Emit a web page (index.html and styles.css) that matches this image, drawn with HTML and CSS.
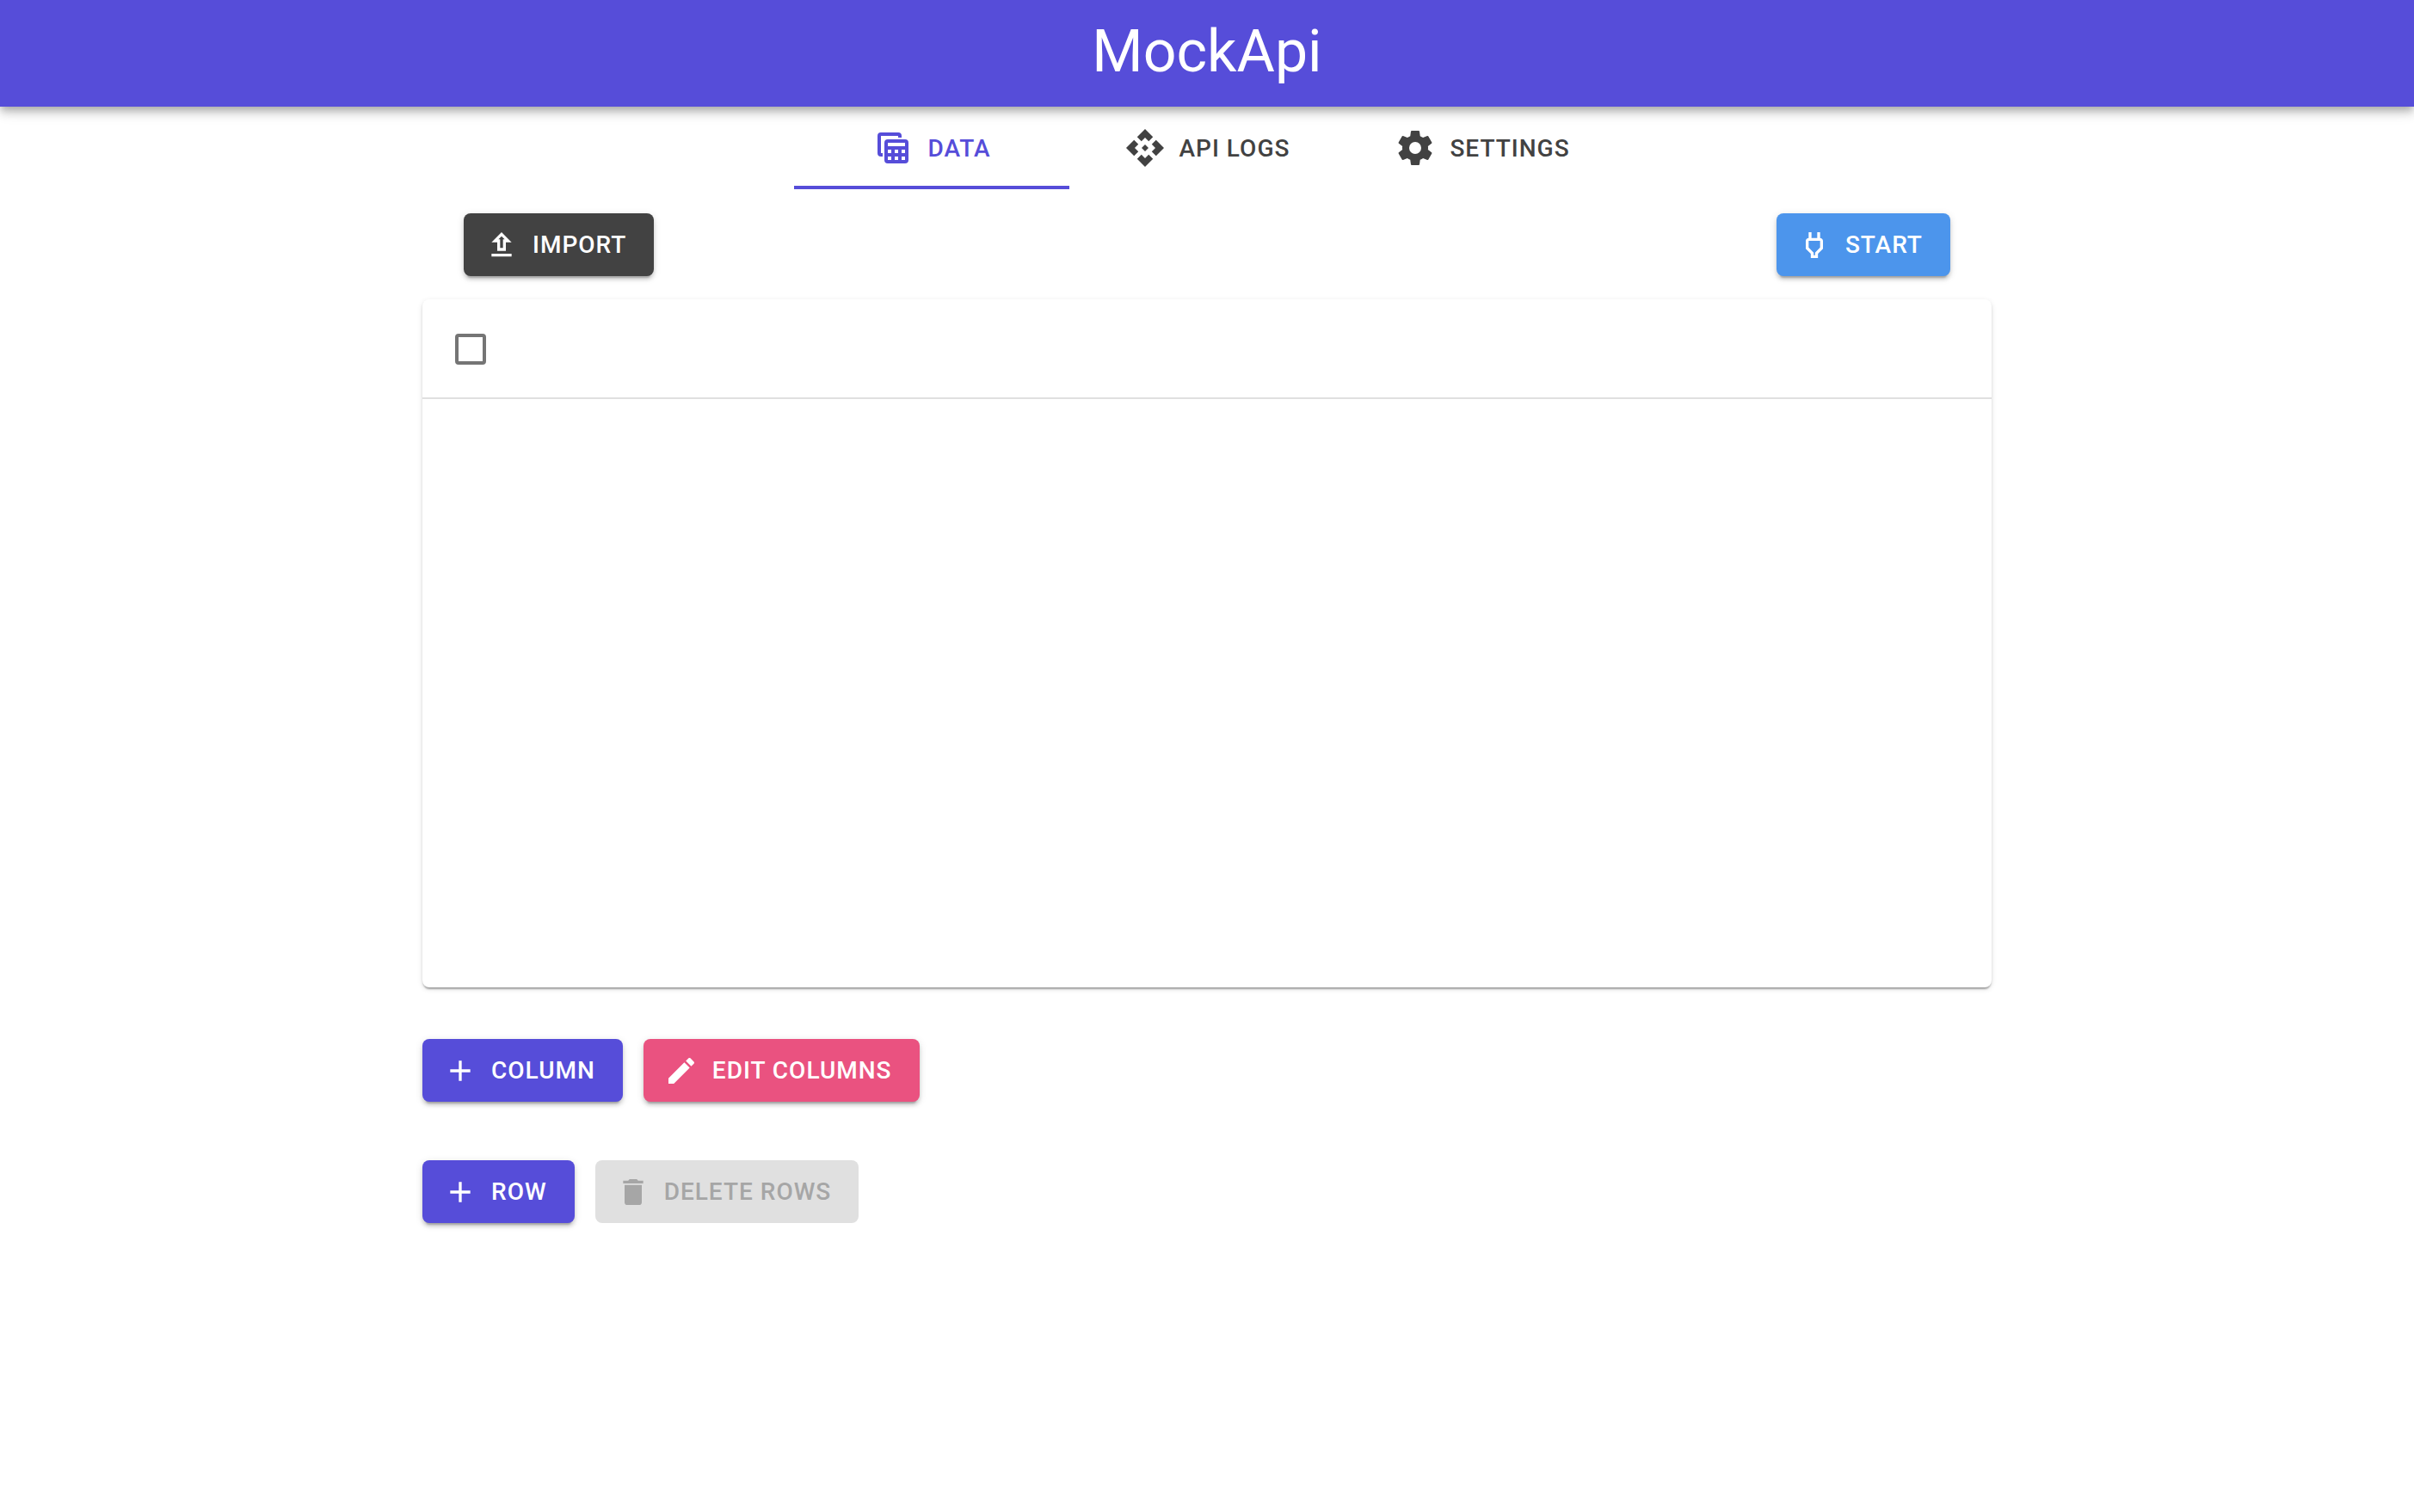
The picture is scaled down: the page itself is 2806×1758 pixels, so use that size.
FILE: index.html
```html
<!DOCTYPE html>
<html lang="en">
<head>
<meta charset="utf-8">
<meta name="viewport" content="width=device-width, initial-scale=1">
<title>MockApi</title>
<link rel="stylesheet" href="styles.css">
</head>
<body>
<header class="app-bar"><h1 class="app-title">MockApi</h1></header>
<nav class="tabs" role="tablist" aria-label="Sections">
  <button class="tab tab-active" type="button" role="tab" aria-selected="true">
    <svg class="tab-icon" viewBox="0 0 24 24" aria-hidden="true"><path d="M5 3H15A2 2 0 0 1 17 5V6H15V5H5V15H6V17H5A2 2 0 0 1 3 15V5A2 2 0 0 1 5 3Z"/><path fill-rule="evenodd" d="M9 7H19A2 2 0 0 1 21 9V19A2 2 0 0 1 19 21H9A2 2 0 0 1 7 19V9A2 2 0 0 1 9 7ZM9 9V11H19V9ZM9 13V15H11V13ZM13 13V15H15V13ZM17 13V15H19V13ZM9 17V19H11V17ZM13 17V19H15V17ZM17 17V19H19V17Z"/></svg>
    <span>DATA</span>
  </button>
  <button class="tab" type="button" role="tab" aria-selected="false">
    <svg class="tab-icon" viewBox="0 0 24 24" aria-hidden="true"><path d="M14 12l-2 2-2-2 2-2 2 2zm-2-6l2.12 2.12 2.5-2.5L12 1 7.38 5.62l2.5 2.5L12 6zm-6 6l2.12-2.12-2.5-2.5L1 12l4.62 4.62 2.5-2.5L6 12zm12 0l-2.12 2.12 2.5 2.5L23 12l-4.62-4.62-2.5 2.5L18 12zm-6 6l-2.12-2.12-2.5 2.5L12 23l4.62-4.62-2.5-2.5L12 18z"/></svg>
    <span>API LOGS</span>
  </button>
  <button class="tab" type="button" role="tab" aria-selected="false">
    <svg class="tab-icon" viewBox="0 0 24 24" aria-hidden="true"><path d="M12 15.5A3.5 3.5 0 0 1 8.5 12 3.5 3.5 0 0 1 12 8.5 3.5 3.5 0 0 1 15.5 12 3.5 3.5 0 0 1 12 15.5M19.43 12.97C19.47 12.65 19.5 12.33 19.5 12 19.5 11.67 19.47 11.34 19.43 11L21.54 9.37C21.73 9.22 21.78 8.95 21.66 8.73L19.66 5.27C19.54 5.05 19.27 4.96 19.05 5.05L16.56 6.05C16.04 5.66 15.5 5.32 14.87 5.07L14.5 2.42C14.46 2.18 14.25 2 14 2H10C9.75 2 9.54 2.18 9.5 2.42L9.13 5.07C8.5 5.32 7.96 5.66 7.44 6.05L4.95 5.05C4.73 4.96 4.46 5.05 4.34 5.27L2.34 8.73C2.21 8.95 2.27 9.22 2.46 9.37L4.57 11C4.53 11.34 4.5 11.67 4.5 12 4.5 12.33 4.53 12.65 4.57 12.97L2.46 14.63C2.27 14.78 2.21 15.05 2.34 15.27L4.34 18.73C4.46 18.95 4.73 19.03 4.95 18.95L7.44 17.94C7.96 18.34 8.5 18.68 9.13 18.93L9.5 21.58C9.54 21.82 9.75 22 10 22H14C14.25 22 14.46 21.82 14.5 21.58L14.87 18.93C15.5 18.67 16.04 18.34 16.56 17.94L19.05 18.95C19.27 19.03 19.54 18.95 19.66 18.73L21.66 15.27C21.78 15.05 21.73 14.78 21.54 14.63L19.43 12.97Z"/></svg>
    <span>SETTINGS</span>
  </button>
</nav>
<main class="content">
  <div class="toolbar">
    <button class="btn btn-dark" type="button">
      <svg class="btn-icon" viewBox="0 0 24 24" aria-hidden="true"><path d="M9 10V16H15V10H19L12 3 5 10H9M12 5.8L14.2 8H13V14H11V8H9.8L12 5.8M19 18H5V20H19V18Z"/></svg>
      <span>IMPORT</span>
    </button>
    <button class="btn btn-info" type="button">
      <svg class="btn-icon" viewBox="0 0 24 24" aria-hidden="true"><path fill-rule="evenodd" d="M16 7V3H14V7H10V3H8V7C7 7 6 8 6 9V14.5L9.5 18V21H14.5V18L18 14.5V9C18 8 17 7 16 7M16 13.67L12.5 17.19V19H11.5V17.19L8 13.67V9H16V13.67Z"/></svg>
      <span>START</span>
    </button>
  </div>
  <section class="card">
    <table class="data-table">
      <thead>
        <tr><th scope="col"><input class="checkbox" type="checkbox" aria-label="Select all rows"></th></tr>
      </thead>
    </table>
  </section>
  <div class="action-rows">
    <div class="actions">
      <button class="btn btn-primary" type="button">
        <svg class="btn-icon" viewBox="0 0 24 24" aria-hidden="true"><path d="M19 13H13V19H11V13H5V11H11V5H13V11H19V13Z"/></svg>
        <span>COLUMN</span>
      </button>
      <button class="btn btn-pink" type="button">
        <svg class="btn-icon" viewBox="0 0 24 24" aria-hidden="true"><path d="M20.71 7.04C21.1 6.65 21.1 6 20.71 5.63L18.37 3.29C18 2.9 17.35 2.9 16.96 3.29L15.12 5.12 18.87 8.87M3 17.25V21H6.75L17.81 9.93 14.06 6.18 3 17.25Z"/></svg>
        <span>EDIT COLUMNS</span>
      </button>
    </div>
    <div class="actions">
      <button class="btn btn-primary" type="button">
        <svg class="btn-icon" viewBox="0 0 24 24" aria-hidden="true"><path d="M19 13H13V19H11V13H5V11H11V5H13V11H19V13Z"/></svg>
        <span>ROW</span>
      </button>
      <button class="btn" type="button" disabled>
        <svg class="btn-icon" viewBox="0 0 24 24" aria-hidden="true"><path d="M19 4H15.5L14.5 3H9.5L8.5 4H5V6H19M6 19A2 2 0 0 0 8 21H16A2 2 0 0 0 18 19V7H6V19Z"/></svg>
        <span>DELETE ROWS</span>
      </button>
    </div>
  </div>
</main>
</body>
</html>
```

FILE: styles.css
```css
:root {
  --primary: #564dd9;
  --dark: #424242;
}

*,
*::before,
*::after {
  box-sizing: border-box;
}

body {
  margin: 0;
  background: #fff;
  font-family: Roboto, "Liberation Sans", sans-serif;
}

button {
  border: 0;
  font: 500 28px/33px Roboto, "Liberation Sans", sans-serif;
  letter-spacing: 1px;
  white-space: nowrap;
}

svg {
  display: block;
  flex: none;
  fill: currentColor;
}

.app-bar {
  position: relative;
  z-index: 1;
  padding: 20px 32px 24px;
  background: var(--primary);
  color: #fff;
  text-align: center;
  box-shadow: 0 4px 8px -2px rgba(0, 0, 0, .2), 0 8px 10px rgba(0, 0, 0, .14), 0 2px 20px rgba(0, 0, 0, .12);
}

.app-title {
  margin: 0;
  font-size: 68px;
  font-weight: 400;
  line-height: 80px;
}

.tabs {
  display: flex;
  justify-content: center;
}

.tab {
  display: flex;
  align-items: center;
  justify-content: center;
  gap: 16px;
  width: 320px;
  height: 96px;
  padding: 0;
  background: none;
  color: var(--dark);
}

.tab-active {
  color: var(--primary);
  box-shadow: inset 0 -4px 0 var(--primary);
}

.tab-icon {
  width: 48px;
  height: 48px;
}

.content {
  width: 65%;
  margin: 0 auto;
}

.toolbar {
  display: flex;
  justify-content: space-between;
  padding: 28px 48px 27px;
}

.btn {
  display: flex;
  align-items: center;
  gap: 16px;
  padding: 20px 32px 20px 24px;
  border-radius: 8px;
  color: #fff;
  box-shadow: 0 6px 2px -4px rgba(0, 0, 0, .2), 0 4px 4px rgba(0, 0, 0, .14), 0 2px 10px rgba(0, 0, 0, .12);
}

.btn-icon {
  width: 40px;
  height: 40px;
  margin: -4px 0;
}

.btn-primary {
  background: var(--primary);
}

.btn-dark {
  background: var(--dark);
}

.btn-info {
  background: #4c95ec;
}

.btn-pink {
  background: #ea5280;
}

.btn:disabled {
  background: #e0e0e0;
  color: #a6a6a6;
  box-shadow: none;
}

.card {
  min-height: 800px;
  border-radius: 8px;
  background: #fff;
  box-shadow: 0 4px 2px -2px rgba(0, 0, 0, .2), 0 2px 2px rgba(0, 0, 0, .14), 0 2px 6px rgba(0, 0, 0, .12);
}

.data-table {
  width: 100%;
  border-collapse: separate;
  border-spacing: 0;
}

.data-table th {
  height: 116px;
  padding: 2px 38px 0;
  border-bottom: 2px solid #e0e0e0;
  text-align: left;
  vertical-align: middle;
}

.checkbox {
  display: block;
  appearance: none;
  width: 36px;
  height: 36px;
  margin: 0;
  border: 4px solid #757575;
  border-radius: 4px;
}

.checkbox:checked {
  border-color: var(--primary);
  background: var(--primary);
}

.action-rows {
  display: grid;
  gap: 68px;
  padding: 60px 0;
}

.actions {
  display: flex;
  gap: 24px;
}
```
